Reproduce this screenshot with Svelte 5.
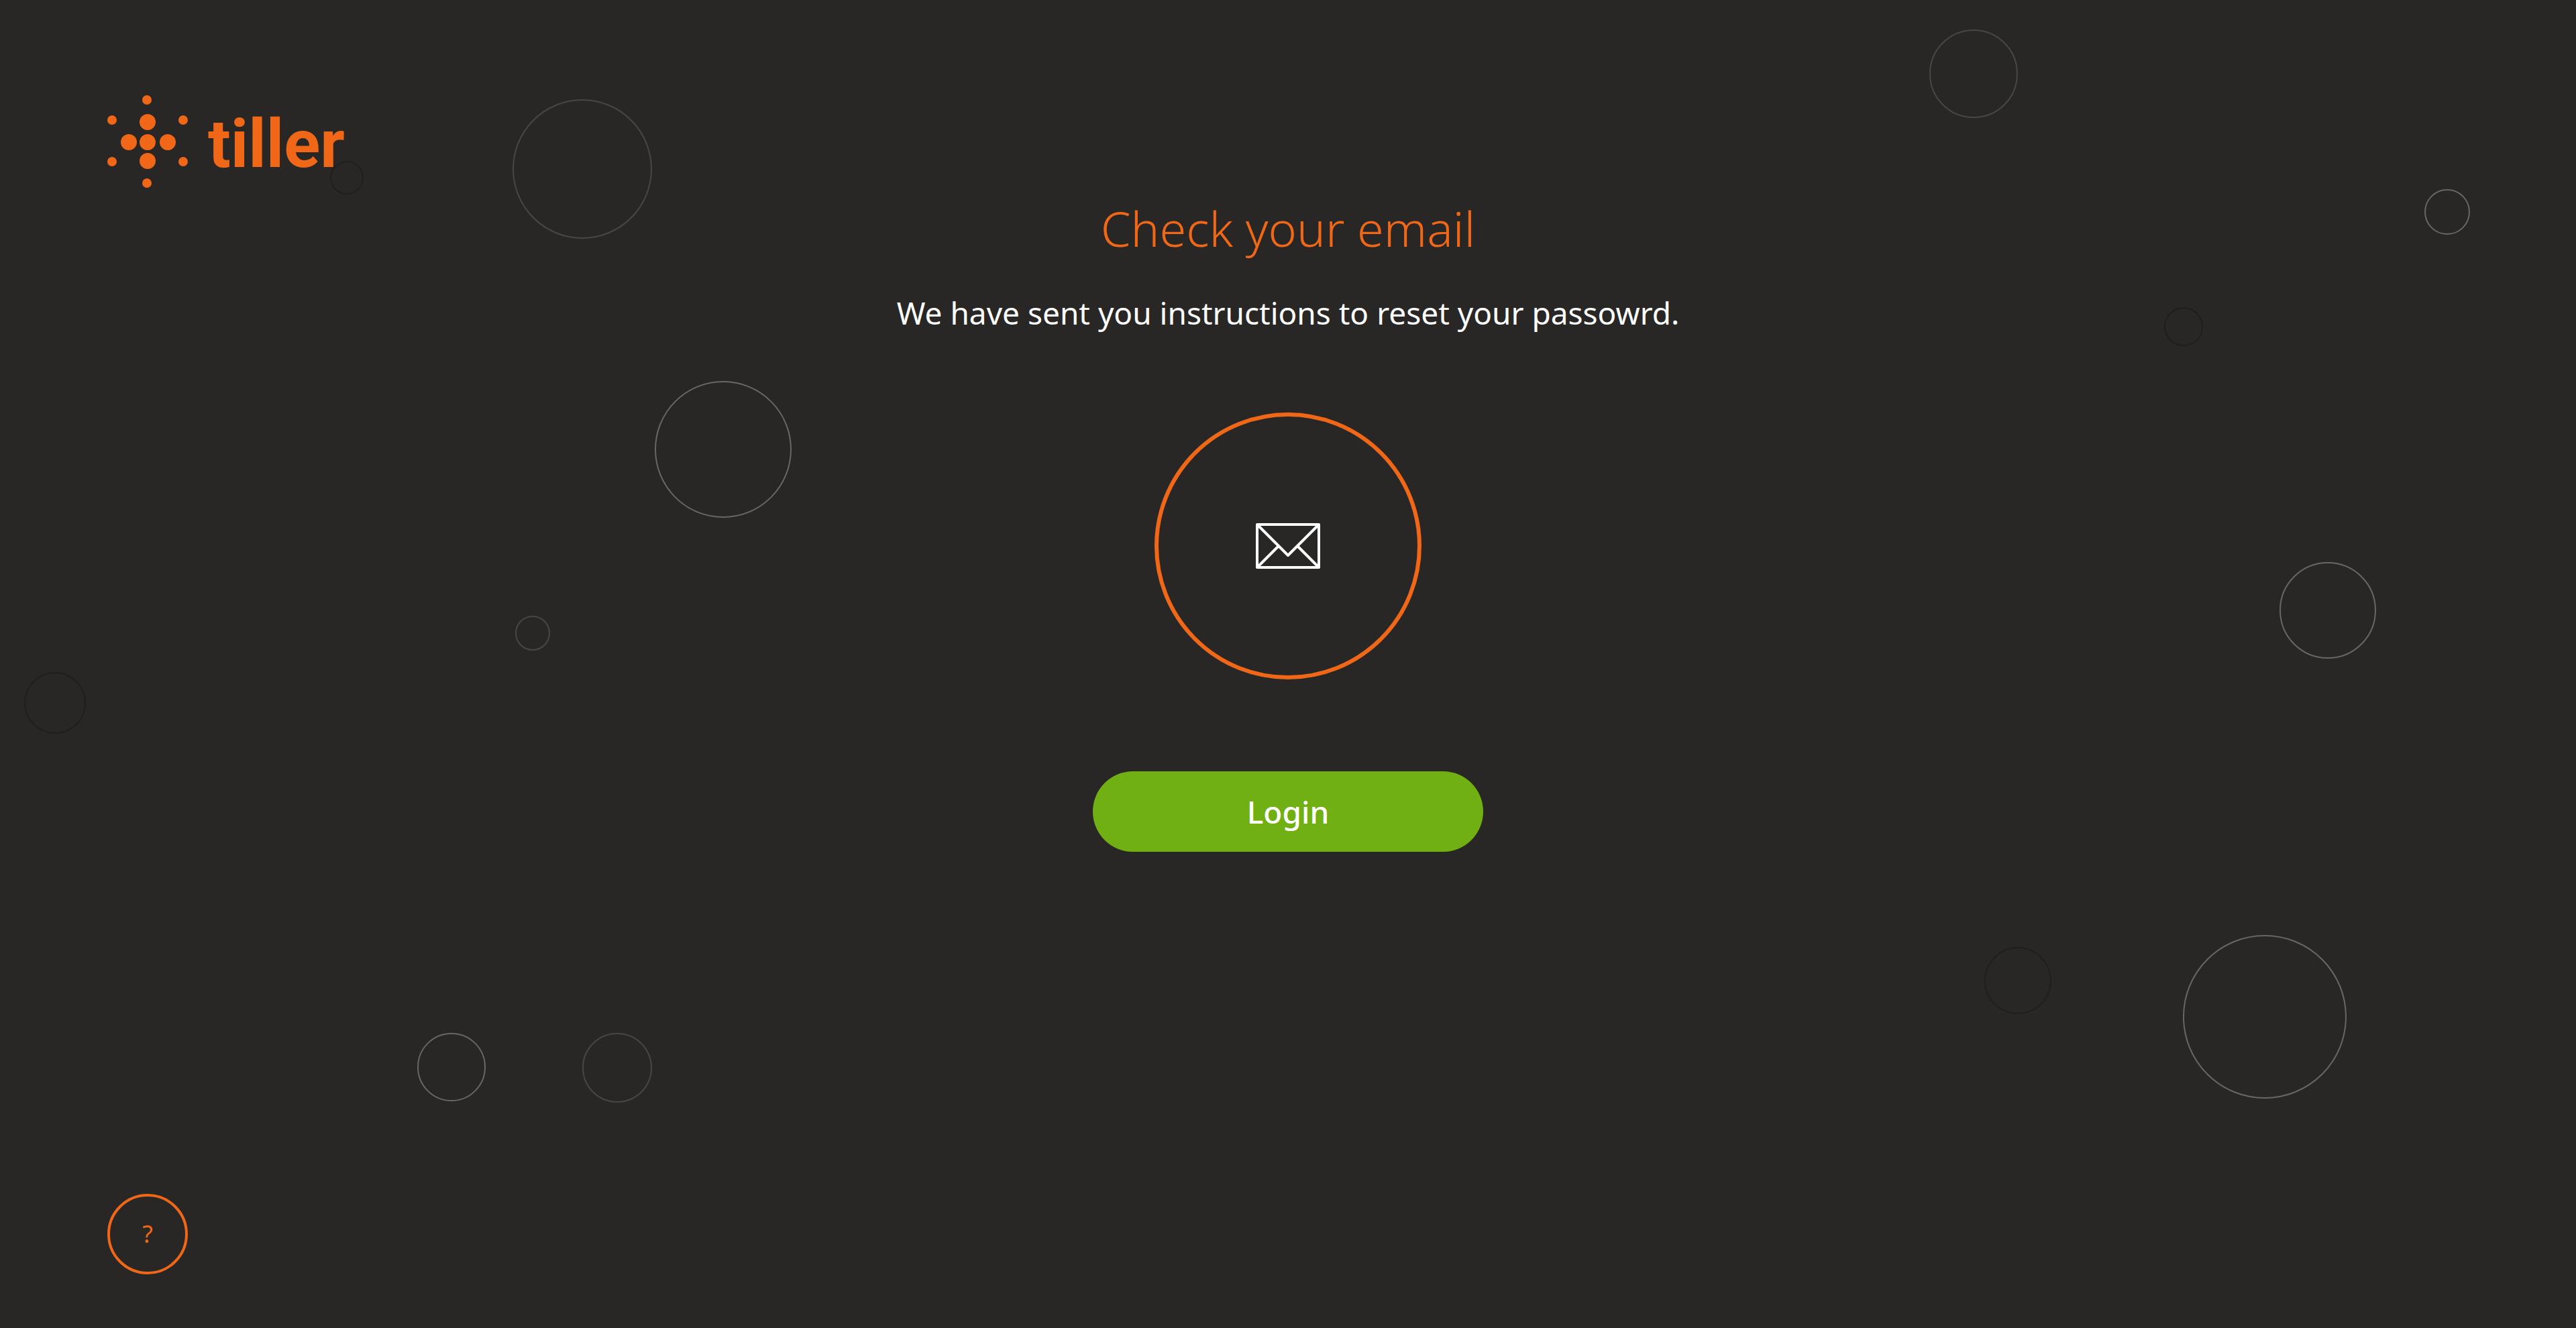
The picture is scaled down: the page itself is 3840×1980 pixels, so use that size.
<script>
  // Outlined bubbles of the backdrop: centre, radius and tone.
  const bubbles = [
    { cx: 868, cy: 252, r: 103, tone: 'dim' },
    { cx: 1078, cy: 670, r: 101, tone: 'light' },
    { cx: 794, cy: 944, r: 25, tone: 'dim' },
    { cx: 2942, cy: 110, r: 65, tone: 'dim' },
    { cx: 3648, cy: 316, r: 33, tone: 'light' },
    { cx: 3255, cy: 487, r: 28, tone: 'dark' },
    { cx: 3470, cy: 910, r: 71, tone: 'light' },
    { cx: 3008, cy: 1462, r: 49, tone: 'dark' },
    { cx: 3376, cy: 1516, r: 121, tone: 'light' },
    { cx: 82, cy: 1048, r: 45, tone: 'dark' },
    { cx: 673, cy: 1591, r: 50, tone: 'light' },
    { cx: 920, cy: 1592, r: 51, tone: 'dim' },
    { cx: 517, cy: 265, r: 24, tone: 'dark' }
  ];
</script>

<div class="page">
  <svg class="backdrop" viewBox="0 0 3840 1980" preserveAspectRatio="xMidYMid slice" aria-hidden="true">
    {#each bubbles as b}
      <circle class={b.tone} cx={b.cx} cy={b.cy} r={b.r} />
    {/each}
  </svg>

  <header>
    <a class="logo" href="/" aria-label="tiller">
      <svg class="mark" viewBox="0 0 120 138" aria-hidden="true">
        <circle cx="59" cy="7" r="7" />
        <circle cx="7" cy="37" r="7" />
        <circle cx="113" cy="37" r="7" />
        <circle cx="7" cy="99" r="7" />
        <circle cx="113" cy="99" r="7" />
        <circle cx="59" cy="131" r="7" />
        <circle cx="60" cy="40" r="12" />
        <circle cx="32" cy="70" r="12" />
        <circle cx="60" cy="70" r="12" />
        <circle cx="90" cy="70" r="12" />
        <circle cx="60" cy="98" r="12" />
      </svg>
      <span class="wordmark">tiller</span>
    </a>
  </header>

  <main>
    <h1>Check your email</h1>
    <p>We have sent you instructions to reset your passowrd.</p>
    <div class="ring">
      <svg class="envelope" viewBox="0 0 96 68" aria-hidden="true">
        <rect x="2" y="2" width="92" height="64" />
        <path d="M3 3 48 48 93 3M3 65 34 34M93 65 62 34" />
      </svg>
    </div>
    <button class="login" type="button">Login</button>
  </main>

  <footer>
    <button class="help" type="button" aria-label="Help">?</button>
  </footer>
</div>

<style>
  :global(body) {
    background: #282725;
  }

  .page {
    position: relative;
    display: flex;
    flex-direction: column;
    min-height: 100vh;
    box-sizing: border-box;
    padding: 142px 160px 80px;
    background: #282725;
    color: #fff;
    font-family: 'Noto Sans', 'Open Sans', sans-serif;
  }

  .backdrop {
    position: absolute;
    inset: 0;
    width: 100%;
    height: 100%;
    fill: none;
    stroke-width: 2;
    pointer-events: none;
  }

  .light {
    stroke: #686765;
  }

  .dim {
    stroke: #484745;
  }

  .dark {
    stroke: #201f1d;
  }

  header {
    display: flex;
    height: 138px;
  }

  .logo {
    display: flex;
    align-items: center;
    gap: 30px;
    color: #f06717;
    text-decoration: none;
  }

  .mark {
    width: 120px;
    height: 138px;
    fill: currentColor;
  }

  .wordmark {
    padding-top: 8px;
    font: 700 100px/120px Roboto, sans-serif;
  }

  main {
    display: flex;
    flex: 1;
    flex-direction: column;
    align-items: center;
    text-align: center;
  }

  h1 {
    margin: 18px 0 0;
    color: #f06717;
    font-size: 72px;
    font-weight: 300;
    line-height: 84px;
  }

  p {
    margin: 56px 0 0;
    font-size: 46px;
    line-height: 56px;
  }

  .ring {
    display: flex;
    align-items: center;
    justify-content: center;
    box-sizing: border-box;
    width: 398px;
    height: 398px;
    margin-top: 121px;
    border: 6px solid #f06717;
    border-radius: 50%;
  }

  .envelope {
    width: 96px;
    height: 68px;
    fill: none;
    stroke: #fff;
    stroke-width: 4;
    stroke-linejoin: round;
  }

  .login {
    width: 582px;
    max-width: 100%;
    height: 120px;
    margin-top: 137px;
    padding: 0;
    border: 0;
    border-radius: 60px;
    background: #71b012;
    color: #fff;
    font: 500 46px/56px 'Noto Sans', sans-serif;
    cursor: pointer;
  }

  .help {
    box-sizing: border-box;
    width: 120px;
    height: 120px;
    padding: 0;
    border: 4px solid #f06717;
    border-radius: 50%;
    background: transparent;
    color: #f06717;
    font: 400 36px/44px 'Noto Sans', sans-serif;
    cursor: pointer;
  }

  footer {
    display: flex;
  }

  .logo,
  main,
  .help {
    position: relative;
  }
</style>
